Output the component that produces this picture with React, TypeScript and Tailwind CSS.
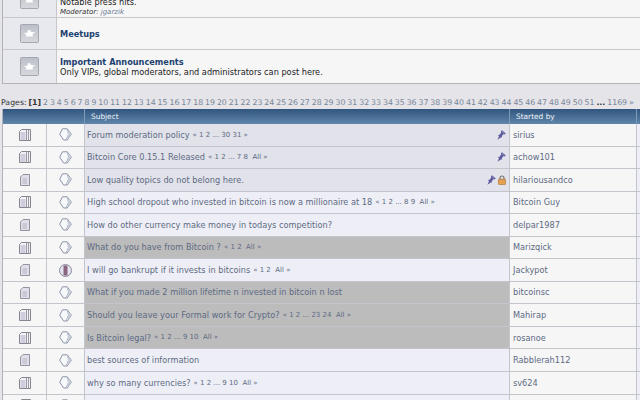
const BOARDS = [
  { h: "h-[18px]", title: "", desc: "Notable press hits.", mod: "jgarzik" },
  { h: "h-[32px]", title: "Meetups" },
  { h: "h-[33px]", title: "Important Announcements", desc: "Only VIPs, global moderators, and administrators can post here." },
];

const PAGES = Array.from({ length: 50 }, (_, i) => i + 2);

type Topic = {
  title: string;
  pages?: string;
  by: string;
  book: "wide" | "small";
  bg: "pin" | "plain" | "gray";
  pin?: boolean;
  lock?: boolean;
  poll?: boolean;
};

const TOPICS: Topic[] = [
  { title: "Forum moderation policy", pages: "« 1 2 ... 30 31 »", by: "sirius", book: "wide", bg: "pin", pin: true },
  { title: "Bitcoin Core 0.15.1 Released", pages: "« 1 2 ... 7 8  All »", by: "achow101", book: "wide", bg: "pin", pin: true },
  { title: "Low quality topics do not belong here.", by: "hilariousandco", book: "small", bg: "pin", pin: true, lock: true },
  { title: "High school dropout who invested in bitcoin is now a millionaire at 18", pages: "« 1 2 ... 8 9  All »", by: "Bitcoin Guy", book: "wide", bg: "plain" },
  { title: "How do other currency make money in todays competition?", by: "delpar1987", book: "small", bg: "plain" },
  { title: "What do you have from Bitcoin ?", pages: "« 1 2  All »", by: "Marizqick", book: "wide", bg: "gray" },
  { title: "I will go bankrupt if it invests in bitcoins", pages: "« 1 2  All »", by: "Jackypot", book: "small", bg: "plain", poll: true },
  { title: "What if you made 2 million lifetime n invested in bitcoin n lost", by: "bitcoinsc", book: "small", bg: "gray" },
  { title: "Should you leave your Formal work for Crypto?", pages: "« 1 2 ... 23 24  All »", by: "Mahirap", book: "wide", bg: "gray" },
  { title: "Is Bitcoin legal?", pages: "« 1 2 ... 9 10  All »", by: "rosanoe", book: "wide", bg: "gray" },
  { title: "best sources of information", by: "Rabblerah112", book: "small", bg: "plain" },
  { title: "why so many currencies?", pages: "« 1 2 ... 9 10  All »", by: "sv624", book: "wide", bg: "plain" },
  { title: "", by: "", book: "wide", bg: "plain" },
];

function BoardIcon() {
  return (
    <svg width="19" height="19" viewBox="0 0 19 19">
      <defs>
        <linearGradient id="boardfill" x1="0" y1="0" x2="0" y2="1">
          <stop offset="0" stopColor="#bcbfc8" />
          <stop offset="1" stopColor="#d6d8de" />
        </linearGradient>
      </defs>
      <rect x="0.5" y="0.5" width="18" height="18" rx="1" fill="url(#boardfill)" stroke="#a4a7b0" />
      <path d="M3.5 9.5 L7.5 8.5 L8 6 L10.5 6.5 L11 8 L15.5 8.5 L12.5 10 L13 12.5 L5.5 12.5 L6.5 10.5 Z" fill="#ffffff" />
    </svg>
  );
}

function BookIcon({ kind }: { kind: "wide" | "small" }) {
  if (kind === "small") {
    return (
      <svg width="10" height="12" viewBox="0 0 10 12">
        <path d="M3 .5 H9.5 V11.5 H.5 V3 Z" fill="#e0dee8" stroke="#92939f" />
        <path d="M2.5 5 H7 M2.5 7 H7 M2.5 9 H7" stroke="#b3b2c2" />
      </svg>
    );
  }
  return (
    <svg width="12" height="12" viewBox="0 0 12 12">
      <path d="M2.5 .5 H11.5 V11.5 H.5 V2.5 Z" fill="#f2f2f5" stroke="#85868f" />
      <rect x="1.5" y="3" width="5" height="8" fill="#cfcede" />
      <path d="M7.5 1 V11 M9.5 1 V11" stroke="#9a9ba6" />
    </svg>
  );
}

function SubjectIcon({ poll }: { poll?: boolean }) {
  if (poll) {
    return (
      <svg width="13" height="13" viewBox="0 0 13 13">
        <circle cx="6.5" cy="6.5" r="6" fill="#e4e4ec" stroke="#8b8ca0" />
        <rect x="4.5" y="1.5" width="4" height="10" fill="#8a6580" />
      </svg>
    );
  }
  return (
    <svg width="13" height="13" viewBox="0 0 13 13">
      <path d="M3.5 .8 H8.2 L12.4 6.2 L8.2 12 H4.6 L.7 6.2 Z" fill="#f7f8fa" stroke="#8b93a5" />
      <path d="M8.2 .8 L9.5 6.2 L7 12" fill="none" stroke="#aeb5c4" />
      <path d="M9.5 2.5 L12.2 6.2 L8.8 11 Z" fill="#c6cbd8" />
    </svg>
  );
}

function PinIcon() {
  return (
    <svg width="9" height="10" viewBox="0 0 9 10">
      <path d="M5 .3 L8.8 3.6 L7.6 4.6 L6.2 4.2 L4.8 6.2 L5 7.6 L3.8 7.4 L.4 9.8 L2 6.2 L1 5.2 L2.8 4.6 L4.2 2.6 L4 1.2 Z" fill="#5e5b9e" />
      <path d="M5 1.5 L7.4 3.6" stroke="#9a97cc" strokeWidth="0.8" />
    </svg>
  );
}

function LockIcon() {
  return (
    <svg width="8" height="10" viewBox="0 0 8 10">
      <path d="M2 4.5 V3 A2 2 0 0 1 6 3 V4.5" fill="none" stroke="#77716a" strokeWidth="1.1" />
      <rect x="0.4" y="4.2" width="7.2" height="5.4" rx="0.8" fill="#e6a24f" stroke="#a9713a" strokeWidth="0.7" />
    </svg>
  );
}

export default function App() {
  return (
    <div className="h-[400px] w-[640px] overflow-hidden bg-[#e4e4e9] font-['DejaVu_Sans',sans-serif] text-[8.2px] text-[#5d6a82]">
      <div className="ml-[2px] border-b border-l border-[#b3b3b7]">
        {BOARDS.map((b, i) => (
          <div key={i} className={`flex ${b.h} border-b border-[#c8c8cc] last:border-b-0`}>
            <div className={`flex w-[54px] shrink-0 justify-center border-r border-[#c8c8cc] bg-[#e8e9ef] ${i === 0 ? "items-end pb-[8px]" : "items-center"}`}>
              <BoardIcon />
            </div>
            <div className={`flex flex-1 flex-col bg-[#f6f6f7] pl-[3px] leading-[10px] ${i === 0 ? "justify-end" : "justify-center"}`}>
              {b.title && <div className="font-bold text-[#1d4270]">{b.title}</div>}
              {b.desc && <div className="text-[#222222]">{b.desc}</div>}
              {b.mod && (
                <div className="text-[7px] italic text-[#333333]">
                  Moderator: <span className="text-[#6a7a90]">{b.mod}</span>
                </div>
              )}
            </div>
          </div>
        ))}
      </div>

      <div className="mt-[13px] flex h-[12px] items-center gap-[1.95px] whitespace-nowrap pl-[1px] text-[7.8px] leading-none text-[#7a8496]">
        <span className="text-[#333333]">Pages:</span>
        <span className="font-bold text-[#333333]">[<span>1</span>]</span>
        {PAGES.map((p) => (
          <span key={p}>{p}</span>
        ))}
        <span className="font-bold text-[#333333]">...</span>
        <span>1169</span>
        <span>»</span>
      </div>

      <div className="ml-[2px] border-l border-[#b3b3b7]">
        <div className="flex h-[15px] items-center bg-gradient-to-b from-[#32567f] to-[#5f86ab] text-[7.4px] text-[#f0f4f8]">
          <div className="w-[81px] shrink-0" />
          <div className="w-[425px] shrink-0 border-l border-[#7d9ab8] pl-[6px] leading-[15px]">Subject</div>
          <div className="w-[127px] shrink-0 border-l border-[#7d9ab8] pl-[6px] leading-[15px]">Started by</div>
          <div className="flex-1 border-l border-[#7d9ab8] leading-[15px]">&nbsp;</div>
        </div>
        {TOPICS.map((t, i) => (
          <div key={i} className="flex h-[22.55px] border-b border-[#c4c5cc]">
            <div className="flex w-[44px] shrink-0 items-center justify-center border-r border-[#c4c5cc] bg-[#f6f6f7]">
              <BookIcon kind={t.book} />
            </div>
            <div className="flex w-[37px] shrink-0 items-center justify-center bg-[#f6f6f7]">
              <SubjectIcon poll={t.poll} />
            </div>
            <div
              className={`flex w-[425px] shrink-0 items-center border-l border-[#c4c5cc] pl-[2px] pr-[3px] ${
                t.bg === "pin" ? "bg-[#e1e2ea]" : t.bg === "gray" ? "bg-[#bcbcbc]" : "bg-[#eeeff6]"
              }`}
            >
              <span className="whitespace-nowrap">{t.title}</span>
              {t.pages && <span className="ml-[3px] whitespace-pre text-[7px]">{t.pages}</span>}
              <span className="ml-auto flex items-center gap-[2px]">
                {t.pin && <PinIcon />}
                {t.lock && <LockIcon />}
              </span>
            </div>
            <div className="flex w-[127px] shrink-0 items-center border-l border-[#c4c5cc] bg-[#f6f6f7] pl-[3px]">{t.by}</div>
            <div className="flex-1 border-l border-[#c4c5cc] bg-[#eeeff6]" />
          </div>
        ))}
      </div>
    </div>
  );
}
